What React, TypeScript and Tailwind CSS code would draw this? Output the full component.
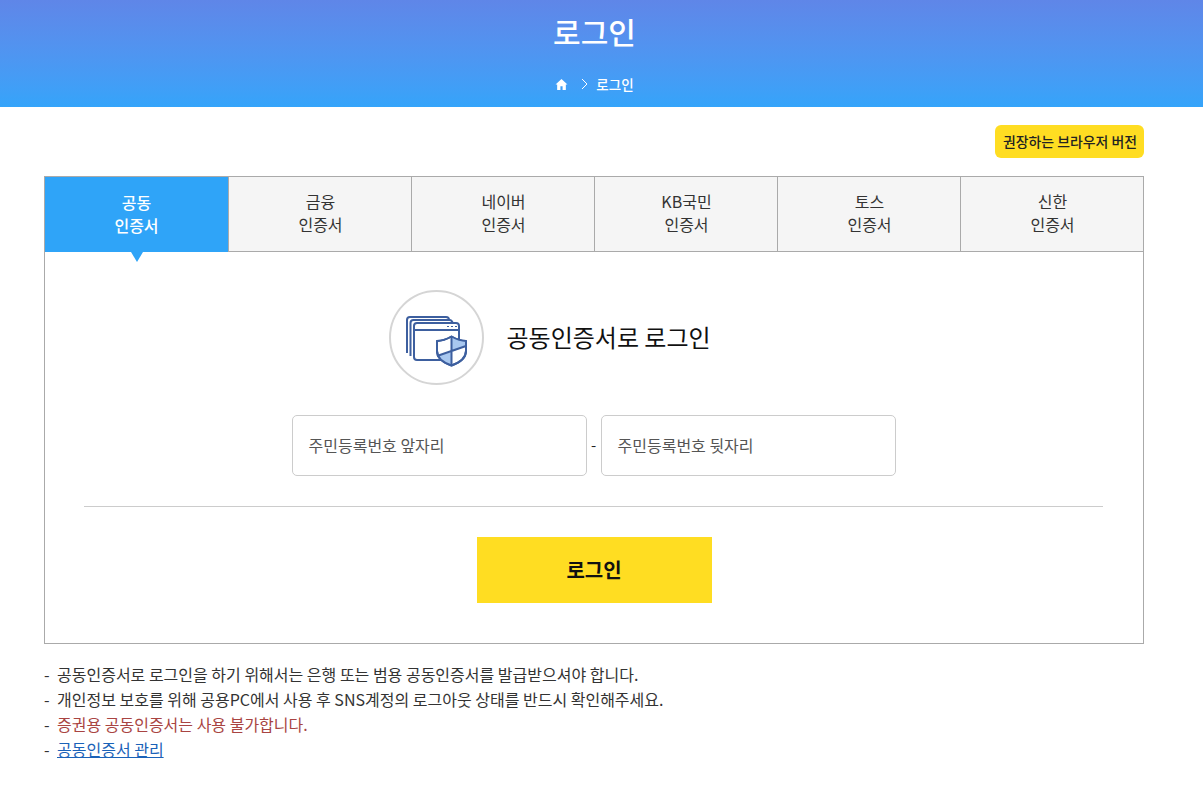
import React from 'react';

const tabs = [
    ['공동', '인증서'],
    ['금융', '인증서'],
    ['네이버', '인증서'],
    ['KB국민', '인증서'],
    ['토스', '인증서'],
    ['신한', '인증서'],
];

const App: React.FC = () => {
    return (
        <div className="min-h-[795px] bg-white font-['Noto_Sans_CJK_KR','Noto_Sans',sans-serif] text-[#222]">
            <header className="h-[107px] bg-gradient-to-b from-[#5f86e8] to-[#34a4fa] text-white flex flex-col items-center pr-[14px]">
                <h1 className="mt-[9px] h-[44px] text-[30px] leading-[44px] font-medium">로그인</h1>
                <div className="mt-[21px] flex items-center text-[13.5px] leading-[20px] font-medium">
                    <svg width="13" height="13" viewBox="0 0 24 24" fill="currentColor">
                        <path d="M12 2 1 12h3v10h6v-7h4v7h6V12h3z" />
                    </svg>
                    <svg className="ml-[12px] mr-[6px]" width="10" height="14" viewBox="0 0 10 14" fill="none" stroke="currentColor" strokeWidth="1">
                        <path d="m2 2 5 5-5 5" />
                    </svg>
                    <span>로그인</span>
                </div>
            </header>

            <main className="w-[1100px] ml-[44px]">
                <div className="mt-[18px] flex justify-end">
                    <span className="h-[33px] pl-[8px] pr-[7px] rounded-[6px] bg-[#ffdd22] text-[13.9px] leading-[33px] font-medium text-[#222]">권장하는 브라우저 버전</span>
                </div>

                <section className="mt-[18px] border border-[#aaa]">
                    <div className="grid grid-cols-6 h-[75px]">
                        {tabs.map((tab, i) => (
                            <div
                                key={tab[0]}
                                className={
                                    i === 0
                                        ? 'relative bg-[#2fa4f8] text-white text-center text-[16px] leading-[23px] pt-[14px] font-medium'
                                        : 'bg-[#f5f5f5] border-l border-b border-[#aaa] text-center text-[16px] leading-[23px] pt-[13px] pl-[1px] text-[#333]'
                                }
                            >
                                {tab[0]}
                                <br />
                                {tab[1]}
                                {i === 0 && (
                                    <span className="absolute left-[86px] top-[75px] w-0 h-0 border-x-[6px] border-x-transparent border-t-[10px] border-t-[#2fa4f8]" />
                                )}
                            </div>
                        ))}
                    </div>

                    <div className="flex items-center justify-center mt-[38px] pr-[2px]">
                        <div className="w-[95px] h-[95px] rounded-full border-2 border-[#d5d5d5] flex items-center justify-center">
                            <svg width="64" height="64" viewBox="0 0 64 64" fill="none" stroke="#3d5f9f" strokeWidth="2" strokeLinejoin="round">
                                <path d="M3 47V14a3 3 0 0 1 3-3h36a3 3 0 0 1 3 3" fill="#fff" />
                                <path d="M6.500 50V17a3 3 0 0 1 3-3h36a3 3 0 0 1 3 3" fill="#fff" />
                                <rect x="10" y="17" width="45" height="37" rx="3" fill="#fff" />
                                <path d="M10 24h45" />
                                <path d="M43 20.500h2M47 20.500h2M51 20.500h2" strokeWidth="1.2" />
                                <path d="M33 35c5 0 10-2 14.500-4.500C52 33 57 35 62 35v10c0 7-6 11.500-14.500 14.500C39 56.500 33 52 33 45z" fill="#fff" />
                                <path d="M47.500 30.500C52 33 57 35 62 35v5L47.500 46zM33 50l14.500-4v13.500C41 57 35.500 54 33 50z" fill="#a9c8f0" stroke="none" />
                                <path d="M33 35c5 0 10-2 14.500-4.500C52 33 57 35 62 35v10c0 7-6 11.500-14.500 14.500C39 56.500 33 52 33 45z" />
                                <path d="M47.500 30.500v29M33 50l29-10" />
                            </svg>
                        </div>
                        <h2 className="ml-[23px] w-[291px] pb-[2px] text-[24px] leading-[34px] text-[#111]">공동인증서로 로그인</h2>
                    </div>

                    <div className="mt-[30px] flex justify-center items-center pr-[1px]">
                        <div className="w-[295px] h-[61px] border border-[#ccc] rounded-[5px] pl-[16px] text-[16px] leading-[59px] text-[#555]">주민등록번호 앞자리</div>
                        <span className="w-[14px] text-center text-[15px]">-</span>
                        <div className="w-[295px] h-[61px] border border-[#ccc] rounded-[5px] pl-[16px] text-[16px] leading-[59px] text-[#555]">주민등록번호 뒷자리</div>
                    </div>

                    <div className="ml-[39px] mr-[40px] mt-[30px] border-t border-[#ccc]" />

                    <div className="mt-[30px] mb-[40px] flex justify-center">
                        <button className="w-[235px] h-[66px] bg-[#ffdd22] text-[20px] font-bold text-[#111]">로그인</button>
                    </div>
                </section>

                <ul className="mt-[18px] text-[16px] leading-[25px] text-[#333]">
                    <li className="flex"><span className="w-[13px]">-</span>공동인증서로 로그인을 하기 위해서는 은행 또는 범용 공동인증서를 발급받으셔야 합니다.</li>
                    <li className="flex"><span className="w-[13px]">-</span>개인정보 보호를 위해 공용PC에서 사용 후 SNS계정의 로그아웃 상태를 반드시 확인해주세요.</li>
                    <li className="flex text-[#a94442]"><span className="w-[13px] text-[#333]">-</span>증권용 공동인증서는 사용 불가합니다.</li>
                    <li className="flex"><span className="w-[13px]">-</span><a href="#" className="text-[#1a62b8] underline">공동인증서 관리</a></li>
                </ul>
            </main>
        </div>
    );
};

export default App;
